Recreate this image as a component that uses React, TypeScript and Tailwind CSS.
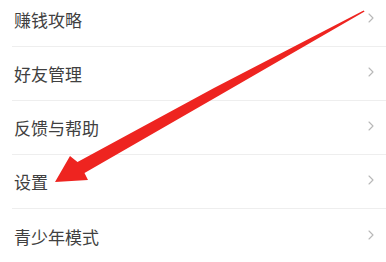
import React from "react";

const items = ["赚钱攻略", "好友管理", "反馈与帮助", "设置", "青少年模式"];

function Chevron() {
  return (
    <svg className="h-[10px] w-[6px]" viewBox="0 0 6 10" fill="none" aria-hidden>
      <path d="M1 1l4 4-4 4" stroke="#b8b8b8" strokeWidth="1.1" strokeLinecap="round" strokeLinejoin="round" />
    </svg>
  );
}

export default function App() {
  return (
    <div
      className="relative h-[262px] w-[386px] overflow-hidden bg-white"
      style={{ fontFamily: '"Noto Sans CJK SC", "Noto Sans", sans-serif' }}
    >
      <ul className="-mt-[7px]">
        {items.map((label, i) => (
          <li
            key={label}
            className={
              "ml-3 flex h-[54px] items-center justify-between pl-[2px] pr-[12px] " +
              (i < items.length - 1 ? "border-b border-[#eeeeee]" : "")
            }
          >
            <span className="text-[17px] leading-none text-[#404040]">{label}</span>
            <span className="-mt-[3px]">
              <Chevron />
            </span>
          </li>
        ))}
      </ul>

      {/* annotation arrow over the list */}
      <svg
        className="pointer-events-none absolute inset-0"
        width="386"
        height="262"
        viewBox="0 0 386 262"
        aria-hidden
      >
        <polygon
          points="55,182 88,180 84.5,173 220,95 364.6,11.6 363.6,10.4 214,88 77.5,162 70,156"
          fill="#ee2420"
        />
      </svg>
    </div>
  );
}
